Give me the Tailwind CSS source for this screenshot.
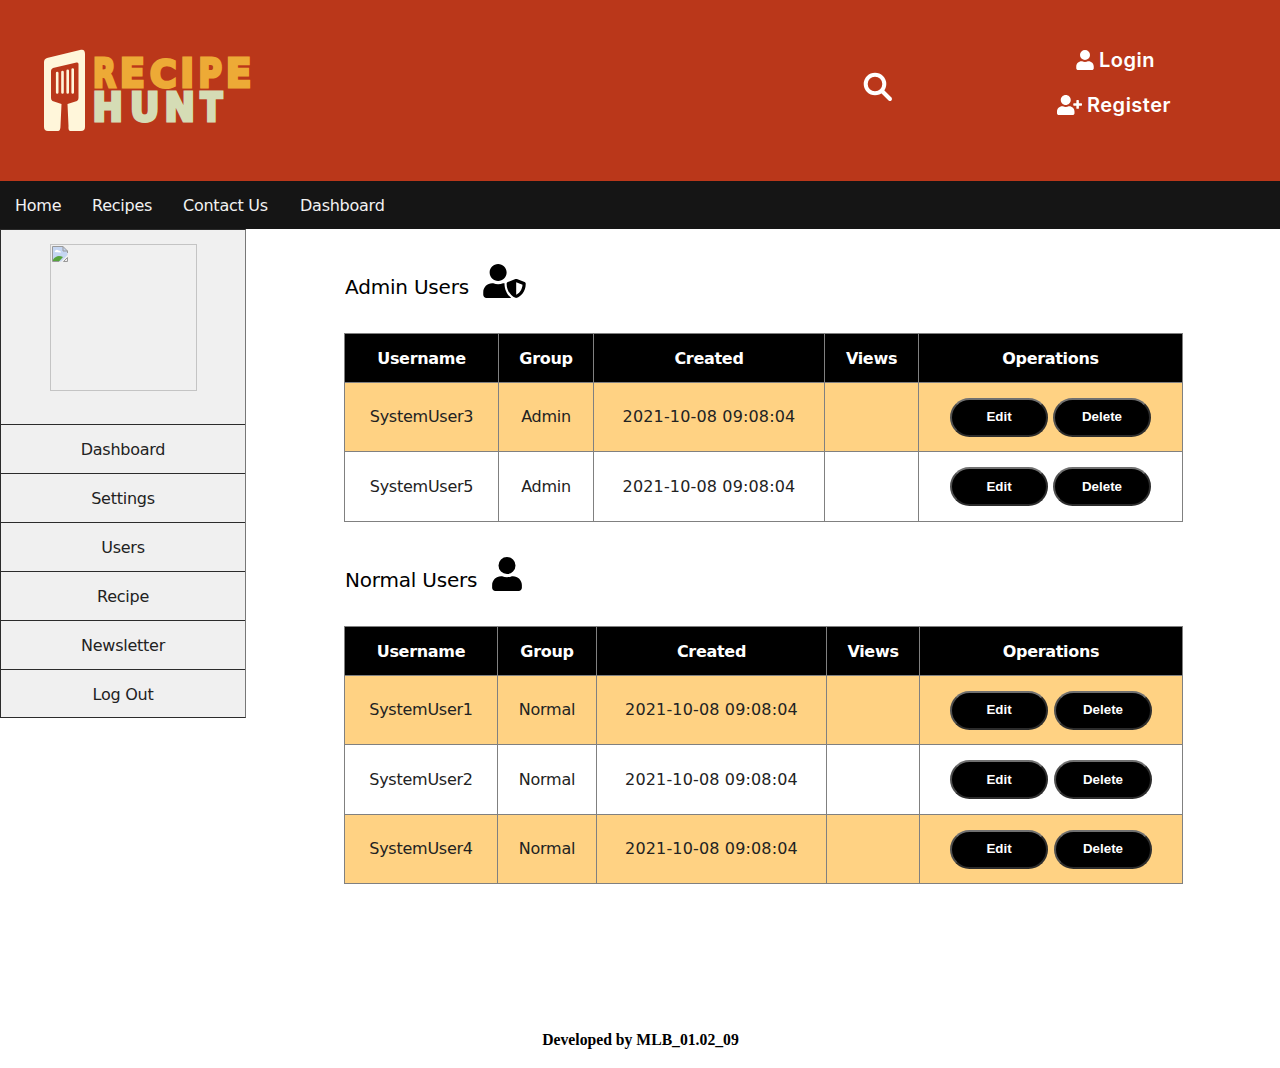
<!DOCTYPE html>
<html lang="en">
<head>
<meta charset="utf-8">
<title>Recipe Hunt</title>
<script src="https://cdn.jsdelivr.net/npm/@tailwindcss/browser@4"></script>
</head>
<body class="bg-white text-black font-['DejaVu_Sans',sans-serif] text-[16px] tracking-[-0.25px] leading-6 h-[1068px] overflow-hidden">
<svg class="hidden">
  <symbol id="user" viewBox="0 0 448 512"><path d="M224 256a128 128 0 1 0 0-256 128 128 0 1 0 0 256zm89.6 32h-16.700c-22.200 10.200-46.900 16-72.900 16s-50.600-5.800-72.900-16h-16.700C60.200 288 0 348.200 0 422.400V464c0 26.500 21.500 48 48 48h352c26.500 0 48-21.500 48-48v-41.600c0-74.200-60.200-134.400-134.400-134.400z"/></symbol>
  <symbol id="userplus" viewBox="0 0 640 512"><path d="M624 208h-64v-64c0-8.800-7.200-16-16-16h-32c-8.800 0-16 7.200-16 16v64h-64c-8.800 0-16 7.200-16 16v32c0 8.800 7.200 16 16 16h64v64c0 8.800 7.200 16 16 16h32c8.800 0 16-7.200 16-16v-64h64c8.800 0 16-7.200 16-16v-32c0-8.800-7.200-16-16-16zm-400 48c70.700 0 128-57.300 128-128S294.700 0 224 0 96 57.300 96 128s57.300 128 128 128zm89.600 32h-16.700c-22.200 10.200-46.900 16-72.900 16s-50.600-5.800-72.900-16h-16.700C60.200 288 0 348.200 0 422.400V464c0 26.500 21.500 48 48 48h352c26.500 0 48-21.500 48-48v-41.600c0-74.200-60.200-134.400-134.400-134.400z"/></symbol>
  <symbol id="usershield" viewBox="0 0 640 512"><path d="M622.300 271.100l-115.200-45c-4.100-1.600-12.600-3.700-22.200 0l-115.200 45c-10.700 4.200-17.700 14-17.700 24.900 0 111.600 68.700 188.800 132.900 213.900 9.600 3.700 18 1.600 22.200 0C558.400 489.900 640 420.500 640 296c0-10.900-7-20.700-17.700-24.900zM496 462.400V273.300l95.500 37.300c-5.600 87.100-60.900 135.400-95.500 151.800zM224 256c70.700 0 128-57.300 128-128S294.700 0 224 0 96 57.300 96 128s57.300 128 128 128zm96 40c0-2.500.8-4.800 1.100-7.200-2.500-.1-4.900-.8-7.500-.8h-16.700c-22.200 10.200-46.900 16-72.900 16s-50.600-5.800-72.900-16h-16.700C60.200 288 0 348.200 0 422.400V464c0 26.500 21.500 48 48 48h352c6.800 0 13.300-1.500 19.200-4-54-42.900-99.200-116.700-99.200-212z"/></symbol>
</svg>

<header class="h-[181px] bg-[#ba371a] flex items-start text-white">
  <svg class="ml-[44px] mt-[48px] w-[212px] h-[86px] shrink-0" viewBox="0 0 212 86">
    <path fill="#fff6da" d="M3 10 37 1.800Q41 1 41 6V79Q41 83 37 83H26.500Q24 83 24.500 78L23.500 56 33 53Q34.500 52 34.500 50V16Q34.500 14 32.500 14.500L9 20Q7 21 7 23V50Q7 52 8.500 53L17.500 56 16.500 78Q16.500 83 14 83H4Q0 83 0 79V14Q0 11 3 10Z"/>
    <path stroke="#fff6da" stroke-width="2.600" stroke-linecap="round" d="M13.200 25V44.500M18.500 24V44.500M23.700 22.700V44.500M28.700 21.500V44.500"/>
    <g font-family="DejaVu Sans, sans-serif" font-weight="700" stroke-width="3.200" letter-spacing="0" fill="#edaa36" stroke="#edaa36" font-size="39">
      <text transform="translate(49 39.200)  scale(.76 .99)">R</text>
      <text transform="translate(76 39.200) scale(.93 .99)">E</text>
      <text transform="translate(106 38.900) scale(.93 .96)">C</text>
      <text transform="translate(136.500 39.200) scale(.92 .99)">I</text>
      <text transform="translate(154.500 39.200) scale(.82 .99)">P</text>
      <text transform="translate(182 39.200) scale(.95 .99)">E</text>
    </g>
    <g font-family="DejaVu Sans, sans-serif" font-weight="700" stroke-width="3.200" letter-spacing="0" fill="#d5dcb5" stroke="#d5dcb5" font-size="39">
      <text transform="translate(48.500 73.100) scale(.93 .99)">H</text>
      <text transform="translate(86 73.100) scale(.93 .99)">U</text>
      <text transform="translate(120.500 73.100) scale(.93 .99)">N</text>
      <text transform="translate(156.500 73.100) scale(.82 .99)">T</text>
    </g>
  </svg>
  <svg class="ml-[607px] mt-[72px] w-[30px] h-[30px] shrink-0" viewBox="0 0 30 30" fill="none" stroke="#fff" stroke-linecap="round"><circle cx="12" cy="12" r="9.300" stroke-width="4"/><path stroke-width="4" d="M19 19 27 27"/></svg>
  <div class="ml-[144px] mt-[48px] w-[154px] flex flex-col gap-[21px] items-center font-['Inter',sans-serif] font-semibold text-[20px] tracking-[0.5px] leading-6">
    <div class="flex items-center gap-[5px] ml-[3px]"><svg class="w-[18px] h-5" fill="#fff"><use href="#user"/></svg><span>Login</span></div>
    <div class="flex items-center gap-[5px]"><svg class="w-[25px] h-5" fill="#fff"><use href="#userplus"/></svg><span>Register</span></div>
  </div>
</header>

<nav class="h-12 bg-[#151515] text-[#f2f2f2] flex items-center pl-[15px] pt-px gap-[31px]">
  <a class="w-[46px] whitespace-nowrap">Home</a><a class="w-[60px] whitespace-nowrap">Recipes</a><a class="w-[86px] whitespace-nowrap">Contact Us</a><a class="whitespace-nowrap">Dashboard</a>
</nav>

<div class="flex h-[770px]">
  <aside class="w-[246px] h-[489px] bg-[#f0f0f0] border border-[#2b2b2b] border-r-[#777] text-center text-[#222] flex flex-col">
    <div class="h-[194px] shrink-0 pt-[14px] flex justify-center items-start">
      <div class="w-[147px] h-[147px] border border-[#c4c4c4] p-px">
        <svg class="w-4 h-4" viewBox="0 0 16 16"><path fill="#c5d6f2" d="M.5 .5H11L15.500 5V9L9 15.500H.5Z"/><path fill="#fff" d="M2.500 6Q4 2.500 6.500 4.500 9 4.500 9 6.500Z"/><path fill="#57a43d" d="M1 15.500V13.500Q5 8 11 11L7 15.500Z"/><path fill="none" stroke="#999" d="M.5 15.500V.5H11L15.500 5V7M11 .5V5H15.500M.5 15.500H7M11.500 15.500H15.500V11.500Z"/></svg>
      </div>
    </div>
    <a class="h-[49px] border-t border-[#2b2b2b] leading-[49px]">Dashboard</a>
    <a class="h-[49px] border-t border-[#2b2b2b] leading-[49px]">Settings</a>
    <a class="h-[49px] border-t border-[#2b2b2b] leading-[49px]">Users</a>
    <a class="h-[49px] border-t border-[#2b2b2b] leading-[49px]">Recipe</a>
    <a class="h-[49px] border-t border-[#2b2b2b] leading-[49px]">Newsletter</a>
    <a class="h-[48px] border-t border-[#2b2b2b] leading-[49px]">Log Out</a>
  </aside>

  <main class="ml-[98px] w-[839px] text-[#222]">
    <h2 class="h-[104px] pt-[35px] flex items-start gap-[15px] text-[20px] tracking-[-0.2px] text-black"><span class="pt-[11px] pl-px w-[124px] whitespace-nowrap">Admin Users</span><svg class="w-[43px] h-[34px]"><use href="#usershield"/></svg></h2>
    <div id="admins"></div>
    <h2 class="h-[104px] pt-[35px] flex items-start gap-[15px] text-[20px] tracking-[-0.2px] text-black"><span class="pt-[11px] pl-px w-[133px] whitespace-nowrap">Normal Users</span><svg class="w-[30px] h-[34px]"><use href="#user"/></svg></h2>
    <div id="normals"></div>
  </main>
</div>
<footer class="pt-[29px] text-center font-['Liberation_Serif',serif] font-bold text-[15.700px] tracking-normal"><span class="pl-px">Developed by MLB_01.02_09</span></footer>

<script>
const line = 'border-l border-t border-[#808080] flex items-center justify-center whitespace-nowrap';
const btn = t => `<button class="w-[98px] h-[39px] rounded-[20px] border-2 border-t-[#707070] border-l-[#505050] border-r-[#2c2c2c] border-b-[#2c2c2c] bg-black text-white font-['Liberation_Sans',sans-serif] font-bold text-[13.333px] tracking-normal leading-4">${t}</button>`;
function table(id, cols, gap, group, rows) {
  let h = `<div class="grid ${cols} border-r border-b border-[#808080]">`;
  for (const t of ['Username','Group','Created','Views','Operations']) h += `<div class="${line} h-[49px] bg-black text-white font-bold tracking-[-0.3px] pt-px">${t}</div>`;
  rows.forEach(([n, ht], i) => {
    const c = `${line} ${ht} ${i % 2 ? 'bg-white' : 'bg-[#ffd283]'}`;
    h += `<div class="${c}">${n}</div><div class="${c}">${group}</div><div class="${c} tracking-[0.15px]">2021-10-08 09:08:04</div><div class="${c}"></div><div class="${c} ${gap}">${btn('Edit')}${btn('Delete')}</div>`;
  });
  document.getElementById(id).innerHTML = h + '</div>';
}
table('admins', 'grid-cols-[154px_95px_231px_94px_264px]', 'gap-[5px]', 'Admin', [['SystemUser3','h-[69px]'],['SystemUser5','h-[70px]']]);
table('normals', 'grid-cols-[153px_99px_230px_93px_263px]', 'gap-[6px]', 'Normal', [['SystemUser1','h-[69px]'],['SystemUser2','h-[70px]'],['SystemUser4','h-[69px]']]);
</script>
</body>
</html>
